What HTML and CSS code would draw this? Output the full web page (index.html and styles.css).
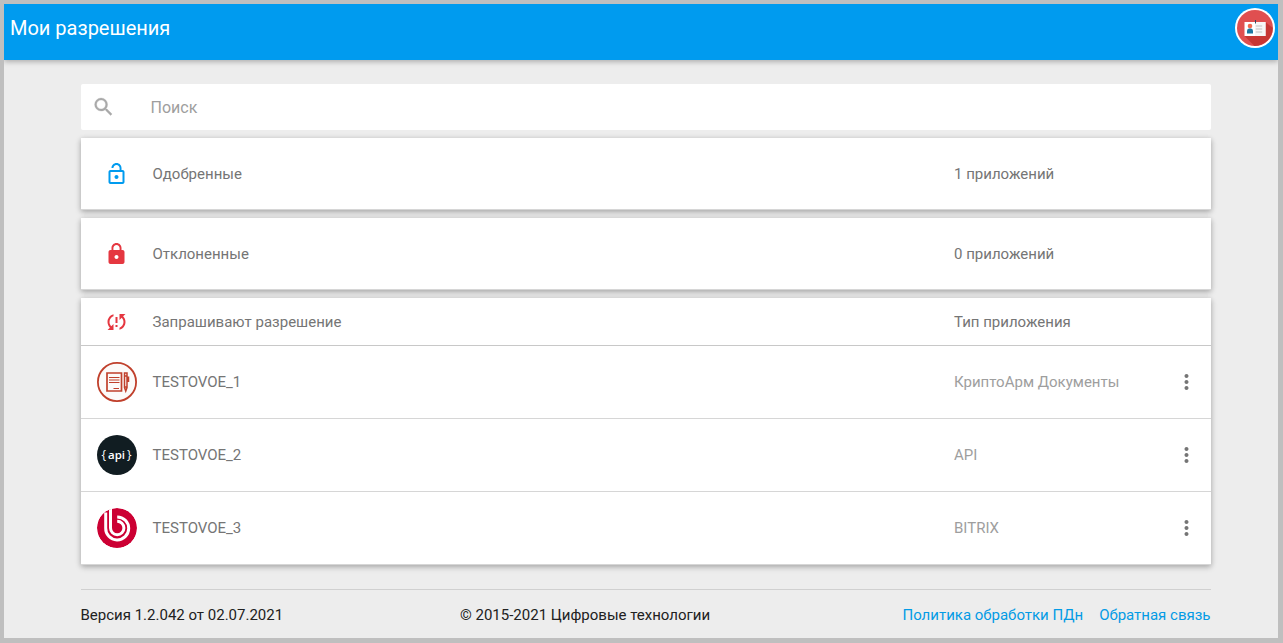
FILE: index.html
```html
<!DOCTYPE html>
<html lang="ru">
<head>
<meta charset="utf-8">
<title>Мои разрешения</title>
<link rel="stylesheet" href="styles.css">
</head>
<body>
<div class="window">
  <header class="topbar">
    <h1 class="title">Мои разрешения</h1>
    <svg class="avatar" viewBox="0 0 40 40">
      <circle cx="20" cy="20" r="20" fill="#fff"/>
      <circle cx="20" cy="20" r="18" fill="#e04f50"/>
      <path d="M30.500 14 37.700 20A18 18 0 0 1 19.500 37.900L9.500 28Z" fill="#c73633"/>
      <path d="M9.500 14h21v14h-21z" fill="#fff"/>
      <path d="M20 14h10.500v14H20z" fill="#f7f7f7"/>
      <path d="M20 12h1v3.500h-1z" fill="#324a5e"/>
      <circle cx="15" cy="18" r="2.300" fill="#f1694f"/>
      <path d="M12 25.500v-2.500q0-2.500 2-2.500h2q2 0 2 2.500v2.500z" fill="#1b76a0"/>
      <path d="M20.700 17.900h6.500M20.700 20.900h6.500M20.700 23.900h6.500" stroke="#d4d4d4" stroke-width="1.500"/>
    </svg>
  </header>
  <main class="content">
    <div class="search">
      <svg class="icon search-icon" viewBox="-.6 0 24 24"><path d="M15.500 14h-.79l-.28-.27A6.471 6.471 0 0 0 16 9.500 6.500 6.500 0 1 0 9.500 16c1.610 0 3.090-.59 4.230-1.570l.27.28v.79l5 4.990L20.490 19l-4.990-5zm-6 0C7.010 14 5 11.990 5 9.500S7.010 5 9.500 5 14 7.010 14 9.500 11.990 14 9.500 14z" stroke="currentColor" stroke-width=".3"/></svg>
      <span class="placeholder">Поиск</span>
    </div>
    <section class="card summary">
      <svg class="icon blue" viewBox="-.5 0 24 24"><path d="M12 17c1.100 0 2-.9 2-2s-.9-2-2-2-2 .9-2 2 .9 2 2 2zm6-9h-1V6c0-2.760-2.240-5-5-5S7 3.240 7 6h1.900c0-1.710 1.390-3.100 3.100-3.100s3.100 1.390 3.100 3.100v2H6c-1.100 0-2 .9-2 2v10c0 1.100.9 2 2 2h12c1.100 0 2-.9 2-2V10c0-1.100-.9-2-2-2zm0 12H6V10h12v10z"/></svg>
      <span class="name">Одобренные</span>
      <span class="type">1 приложений</span>
    </section>
    <section class="card summary">
      <svg class="icon red" viewBox="-.5 0 24 24"><path d="M18 8h-1V6c0-2.760-2.240-5-5-5S7 3.240 7 6v2H6c-1.100 0-2 .9-2 2v10c0 1.100.9 2 2 2h12c1.100 0 2-.9 2-2V10c0-1.100-.9-2-2-2zm-6 9c-1.100 0-2-.9-2-2s.9-2 2-2 2 .9 2 2-.9 2-2 2zm3.100-9H8.900V6c0-1.710 1.390-3.100 3.100-3.100s3.100 1.390 3.100 3.100v2z"/></svg>
      <span class="name">Отклоненные</span>
      <span class="type">0 приложений</span>
    </section>
    <section class="card">
      <div class="row heading">
        <svg class="icon red" viewBox="-.5 0 24 24"><path d="M3 12c0 2.210.91 4.200 2.360 5.640L3 20h6v-6l-2.240 2.240C5.680 15.150 5 13.660 5 12c0-2.610 1.670-4.830 4-5.650V4.260C5.550 5.150 3 8.270 3 12zm8 5h2v-2h-2v2zM21 4h-6v6l2.240-2.240C18.320 8.850 19 10.340 19 12c0 2.610-1.670 4.830-4 5.650v2.090c3.450-.89 6-4.010 6-7.740 0-2.210-.91-4.200-2.360-5.640L21 4zm-10 9h2V7h-2v6z"/></svg>
        <span class="name">Запрашивают разрешение</span>
        <span class="type">Тип приложения</span>
      </div>
      <div class="row">
        <svg class="logo" viewBox="0 0 40 40" fill="none" stroke="#c0402c">
          <circle cx="20" cy="20" r="19.100" fill="#fcfaf9" stroke-width="1.800"/>
          <path d="M10 11h14.500v18H10z" stroke-width="1.700"/>
          <path d="M12 15.500h10.500M12 18h10.500M12 20.500h10.500M16.500 26.500h5.500" stroke-width="1.200"/>
          <path d="M27.500 11h2.500v14.500l-1.250 3.500-1.250-3.500zM27.500 14h3M27.500 25h3M31.500 14.500v5.500" stroke-width="1.500"/>
        </svg>
        <span class="name">TESTOVOE_1</span>
        <span class="type light">КриптоАрм Документы</span>
        <svg class="icon more" viewBox="-.5 0 24 24"><path d="M12 8c1.100 0 2-.9 2-2s-.9-2-2-2-2 .9-2 2 .9 2 2 2zm0 2c-1.100 0-2 .9-2 2s.9 2 2 2 2-.9 2-2-.9-2-2-2zm0 6c-1.100 0-2 .9-2 2s.9 2 2 2 2-.9 2-2-.9-2-2-2z"/></svg>
      </div>
      <div class="row">
        <div class="logo api"><span class="brace">{</span><span>api</span><span class="brace">}</span></div>
        <span class="name">TESTOVOE_2</span>
        <span class="type light">API</span>
        <svg class="icon more" viewBox="-.5 0 24 24"><path d="M12 8c1.100 0 2-.9 2-2s-.9-2-2-2-2 .9-2 2 .9 2 2 2zm0 2c-1.100 0-2 .9-2 2s.9 2 2 2 2-.9 2-2-.9-2-2-2zm0 6c-1.100 0-2 .9-2 2s.9 2 2 2 2-.9 2-2-.9-2-2-2z"/></svg>
      </div>
      <div class="row">
        <svg class="logo round" viewBox="0 0 40 40" fill="none" stroke="#fff">
          <circle cx="20" cy="20" r="20" fill="#cc0033" stroke="none"/>
          <path d="M8.700 4.500V20A11.500 11.500 0 1 0 20.200 8.900" stroke-width="3"/>
          <path d="M13.500 0V20A6.700 6.700 0 1 0 20.200 13.300" stroke-width="3"/>
        </svg>
        <span class="name">TESTOVOE_3</span>
        <span class="type light">BITRIX</span>
        <svg class="icon more" viewBox="-.5 0 24 24"><path d="M12 8c1.100 0 2-.9 2-2s-.9-2-2-2-2 .9-2 2 .9 2 2 2zm0 2c-1.100 0-2 .9-2 2s.9 2 2 2 2-.9 2-2-.9-2-2-2zm0 6c-1.100 0-2 .9-2 2s.9 2 2 2 2-.9 2-2-.9-2-2-2z"/></svg>
      </div>
    </section>
    <footer class="footer">
      <span>Версия 1.2.042 от 02.07.2021</span>
      <span class="copyright">© 2015-2021 Цифровые технологии</span>
      <nav class="links"><a href="#">Политика обработки ПДн</a><a href="#">Обратная связь</a></nav>
    </footer>
  </main>
</div>
</body>
</html>
```
FILE: styles.css
```css
* { box-sizing: border-box; }

body {
  margin: 0;
  font: 15px/20px Roboto, "Noto Sans", sans-serif;
  color: #212121;
}

.window {
  height: 643px;
  border: solid #bfbfbf;
  border-width: 4px 5px 5px 4px;
  background: #ededed;
  overflow: hidden;
}

.topbar {
  display: flex;
  justify-content: space-between;
  height: 56px;
  padding: 4px 3px 0 6px;
  background: #009bef;
  box-shadow: 0 2px 5px rgba(0, 0, 0, .26);
}

.title {
  margin: 0;
  font-size: 20px;
  font-weight: 400;
  line-height: 40px;
  color: #fff;
}

.avatar { width: 40px; height: 40px; }

.content {
  width: 1130px;
  margin: 24px 0 0 76.5px;
}

.search {
  display: flex;
  align-items: center;
  height: 46px;
  padding-left: 10.5px;
  border-radius: 2px;
  background: #fff;
  color: #9e9e9e;
  font-size: 16px;
}

.icon {
  flex: none;
  width: 24px;
  height: 24px;
  fill: currentColor;
}

.search-icon { margin-right: 35.5px; color: #a9a9a9; }
.placeholder { padding-top: 2px; }

.card {
  margin-top: 8px;
  background: #fff;
  color: #757575;
  box-shadow: 0 2px 6px rgba(0, 0, 0, .24), 0 1px 5px rgba(0, 0, 0, .1);
}

.summary, .row {
  display: grid;
  grid-template-columns: 40px 817.5px 1fr 24px;
  align-items: center;
  padding: 0 12.5px 0 16px;
}

.summary { height: 72px; border-bottom: 1px solid #d6d6d6; }
.row { height: 73px; border-bottom: 1px solid #d6d6d6; }
.row.heading { height: 48px; border-bottom-color: #c8c8c8; }
.summary > .icon, .heading > .icon { margin-left: 7.5px; }
.name { padding-left: 16px; }
.blue { color: #009bef; }
.red { color: #e53740; }
.light { color: #9e9e9e; }
.more { color: #757575; }

.logo { width: 40px; height: 40px; }
.round { border-radius: 50%; }

.api {
  display: flex;
  align-items: center;
  justify-content: center;
  gap: 2px;
  border-radius: 50%;
  background: #111d22;
  color: #fff;
  font: 600 11.5px/14px "Open Sans", sans-serif;
}

.brace { font-weight: 400; font-size: 12px; }

.footer {
  display: grid;
  grid-template-columns: 379.5px 1fr auto;
  margin-top: 24px;
  padding-top: 15px;
  border-top: 1px solid #d0d0d0;
}

.links { display: flex; gap: 16px; }
.links a { color: #039be5; text-decoration: none; }
```
